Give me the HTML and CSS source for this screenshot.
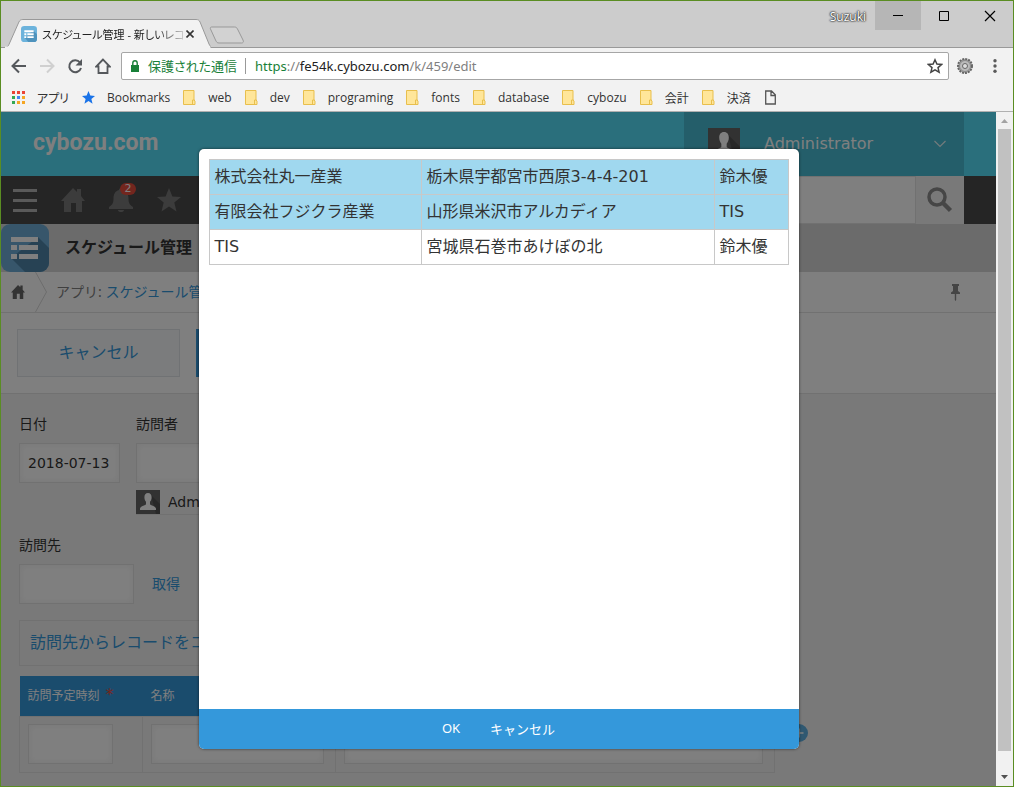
FILE: index.html
```html
<!DOCTYPE html>
<html lang="ja">
<head>
<meta charset="utf-8">
<title>スケジュール管理</title>
<link rel="stylesheet" href="styles.css">
</head>
<body>
<svg class="defs" aria-hidden="true">
  <symbol id="folder" viewBox="0 0 13 15">
    <path d="M1 .5h10V10l1 1v3.500H.5V.5z" fill="#ffe69a" stroke="#e8bf4d"/>
    <path d="M9.500 14.500V10h2" fill="none" stroke="#e8bf4d"/>
  </symbol>
  <symbol id="person" viewBox="0 0 24 24">
    <path d="M0 0h24v24H0z" fill="#646464"/>
    <path d="M15 5l9 9v10h-4z" fill="#505050"/>
    <path d="M12 3c2.400 0 3.600 1.800 3.600 4.200 0 2-.8 3.600-1.600 4.600v2.400c.6 1.200 5 1.600 6 4.200V20H4v-1.600c1-2.600 5.400-3 6-4.200v-2.400c-.8-1-1.600-2.600-1.600-4.600C8.400 4.800 9.600 3 12 3z" fill="#fff"/>
  </symbol>
  <symbol id="house" viewBox="0 0 24 24">
    <path d="M12 0l4 4V1h4v7l4 5h-3v11h-6v-9h-5v9H3V13H0z" fill="currentColor"/>
  </symbol>
  <symbol id="star" viewBox="0 0 24 24">
    <path d="M12 0l3.400 8.500 8.600.5-6.700 5.600 2.200 9L12 18.600 4.500 23.600l2.200-9L0 9l8.600-.5z" fill="currentColor"/>
  </symbol>
</svg>
<div class="window">
  <header class="titlebar">
    <div class="tab">
      <svg class="tab-shape" viewBox="0 0 211 29" preserveAspectRatio="none" aria-hidden="true">
        <path d="M0 28.500h4c2 0 3-1 4-3L18 3c1-2 2-2.500 4-2.500h174c2 0 3 .5 4 2.500l9 22c1 2 2 3.500 4 3.500V29H0z" fill="#f2f2f2" stroke="#999"/>
        <path d="M4 28.500h206" stroke="#f2f2f2" stroke-width="2"/>
      </svg>
      <svg class="favicon" viewBox="0 0 48 48" aria-hidden="true">
        <rect width="48" height="48" rx="10" fill="#6cb3dc"/>
        <path d="M36 13l12 12v13a10 10 0 0 1-10 10H22L12 36z" fill="#4f93bd"/>
        <path d="M10 13h28v6H10zM10 22h6v6h-6zM19 22h19v6H19zM10 31h6v5h-6zM19 31h19v5H19z" fill="#fff"/>
      </svg>
      <span class="tab-title">スケジュール管理 - 新しいレコ</span>
      <button class="tab-close" aria-label="タブを閉じる"><svg viewBox="0 0 8 8"><path d="M.5.5l7 7M7.500.5l-7 7" stroke="#333" stroke-width="1.600"/></svg></button>
    </div>
    <button class="new-tab" aria-label="新しいタブ"><svg viewBox="0 0 36 18"><path d="M2.500 1h23c2 0 2.500 1 3.500 3l5 10c1 2 0 3-1.500 3H10c-2 0-2.500-1-3.500-3L1.500 3C1 2 1.500 1 2.500 1z" fill="#d2d2d2" stroke="#999"/></svg></button>
    <div class="controls">
      <span class="profile">Suzuki</span>
      <button class="control control-active" aria-label="最小化"><svg viewBox="0 0 12 12"><path d="M1 5.500h10" stroke="#000"/></svg></button>
      <button class="control" aria-label="最大化"><svg viewBox="0 0 12 12"><path d="M1.500 1.500h9v9h-9z" fill="none" stroke="#000"/></svg></button>
      <button class="control" aria-label="閉じる"><svg viewBox="0 0 12 12"><path d="M1 1l10 10M11 1L1 11" stroke="#000" stroke-width="1.200"/></svg></button>
    </div>
  </header>

  <div class="toolbar">
    <button class="tool" aria-label="戻る"><svg viewBox="0 0 16 16"><path d="M15 8H2M8 1.500L1.500 8 8 14.500" fill="none" stroke="#55585c" stroke-width="2"/></svg></button>
    <button class="tool tool-off" aria-label="進む"><svg viewBox="0 0 16 16"><path d="M1 8h13M8 1.500L14.500 8 8 14.500" fill="none" stroke="#d0d0d0" stroke-width="2"/></svg></button>
    <button class="tool" aria-label="再読み込み"><svg viewBox="0 0 16 16"><path d="M13 4.500A6 6 0 1 0 14 10" fill="none" stroke="#55585c" stroke-width="2"/><path d="M15 1v6.500H8.500z" fill="#55585c"/></svg></button>
    <button class="tool" aria-label="ホーム"><svg viewBox="0 0 16 16"><path d="M8 1.500L1.200 8.500h2.300V15h9V8.500h2.300z" fill="none" stroke="#55585c" stroke-width="1.800"/></svg></button>
    <div class="omnibox">
      <svg class="lock" viewBox="0 0 8 12" aria-hidden="true"><path d="M0 5h8v7H0z" fill="#188038"/><path d="M1.800 5V3a2.200 2.200 0 0 1 4.400 0v2" fill="none" stroke="#188038" stroke-width="1.400"/></svg>
      <span class="secure">保護された通信</span>
      <span class="url"><span class="scheme">https</span><span class="dim">://</span>fe54k.cybozu.com<span class="dim">/k/459/edit</span></span>
      <button class="tool" aria-label="ブックマーク"><svg viewBox="0 0 16 16"><path d="M8 1.800l1.900 4.300 4.700.4-3.600 3.100 1.100 4.600L8 11.800l-4.100 2.400L5 9.600 1.400 6.500l4.700-.4z" fill="none" stroke="#444" stroke-width="1.500"/></svg></button>
    </div>
    <button class="tool" aria-label="拡張機能"><svg viewBox="0 0 16 16"><circle cx="8" cy="8" r="7" fill="#aaa" stroke="#666" stroke-width="2" stroke-dasharray="2 1"/><circle cx="8" cy="8" r="5.500" fill="#bbb" stroke="#888"/><circle cx="8" cy="8" r="2.500" fill="#ddd" stroke="#666"/></svg></button>
    <button class="tool tool-menu" aria-label="メニュー"><svg viewBox="0 0 16 16"><g fill="#5a5a5a"><circle cx="8" cy="2.700" r="1.700"/><circle cx="8" cy="8" r="1.700"/><circle cx="8" cy="13.300" r="1.700"/></g></svg></button>
  </div>

  <nav class="bookmarks">
    <a href="#"><svg viewBox="0 0 13 13"><path d="M0 0h3v3H0zM5 0h3v3H5zM10 0h3v3h-3z" fill="#ea4335"/><path d="M0 5h3v3H0z" fill="#34a853"/><path d="M5 5h3v3H5z" fill="#4285f4"/><path d="M10 5h3v3h-3zM10 10h3v3h-3zM5 10h3v3H5z" fill="#f5a623"/><path d="M0 10h3v3H0z" fill="#34a853"/></svg>アプリ</a>
    <a href="#" class="starred"><svg><use href="#star"/></svg>Bookmarks</a>
    <a href="#"><svg><use href="#folder"/></svg>web</a>
    <a href="#"><svg><use href="#folder"/></svg>dev</a>
    <a href="#"><svg><use href="#folder"/></svg>programing</a>
    <a href="#"><svg><use href="#folder"/></svg>fonts</a>
    <a href="#"><svg><use href="#folder"/></svg>database</a>
    <a href="#"><svg><use href="#folder"/></svg>cybozu</a>
    <a href="#"><svg><use href="#folder"/></svg>会計</a>
    <a href="#"><svg><use href="#folder"/></svg>決済</a>
    <a href="#" aria-label="ページ"><svg viewBox="0 0 13 15"><path d="M1.700 1h5.800l3.800 3.800V14H1.700zM7 1v4.500h4" fill="none" stroke="#555" stroke-width="1.300"/></svg></a>
  </nav>

  <div class="viewport">
    <div class="page">
      <div class="brandbar">
        <a href="#" class="logo">cybozu.com</a>
        <button class="account">
          <svg class="account-photo" aria-hidden="true"><use href="#person"/></svg>
          <span class="account-name">Administrator</span>
          <svg class="account-arrow" viewBox="0 0 12 8" aria-hidden="true"><path d="M.5 1L6 6.500 11.500 1" fill="none" stroke="#e6f6f8" stroke-width="1.200"/></svg>
        </button>
      </div>

      <div class="navbar">
        <button class="nav-button" aria-label="メニュー"><svg viewBox="0 0 24 24"><path d="M0 2.500h24M0 12.500h24M0 22.500h24" stroke="#b4b4b4" stroke-width="3"/></svg></button>
        <button class="nav-button" aria-label="ポータル"><svg><use href="#house"/></svg></button>
        <button class="nav-button" aria-label="通知"><svg viewBox="0 0 24 24"><path d="M12 0c1.500 0 2 1 2 2 4 1 5.500 4.500 5.500 8.500 0 5 1.500 6.500 4.500 8.500v2H0v-2c3-2 4.500-3.500 4.500-8.500C4.500 6.500 6 3 10 2c0-1 .5-2 2-2zM9 22h6c0 1.500-1.500 2-3 2s-3-.5-3-2z" fill="currentColor"/></svg><span class="count">2</span></button>
        <button class="nav-button" aria-label="ブックマーク"><svg><use href="#star"/></svg></button>
        <form class="search">
          <input type="text" aria-label="検索">
          <button type="button" aria-label="検索"><svg viewBox="0 0 26 26"><circle cx="10" cy="10" r="8" fill="none" stroke="#8c8c8c" stroke-width="3.500"/><path d="M15.500 15.500l8 8" stroke="#8c8c8c" stroke-width="4.500"/></svg></button>
        </form>
      </div>

      <div class="appbar">
        <svg viewBox="0 0 48 48" aria-hidden="true">
          <rect width="48" height="48" rx="9" fill="#6fadd6"/>
          <path d="M37 13l11 11v15a9 9 0 0 1-9 9H24L10 34z" fill="#4e84a8"/>
          <path d="M10 13h27v5H10zM10 21h6v5h-6zM18 21h19v5H18zM10 30h6v5h-6zM18 30h19v5H18z" fill="#fff"/>
        </svg>
        <h1>スケジュール管理</h1>
      </div>

      <div class="crumbs">
        <a href="#" class="crumb-home" aria-label="ホーム"><svg><use href="#house"/></svg></a>
        <svg class="crumb-arrow" viewBox="0 0 12 40" aria-hidden="true"><path d="M.5 0l11 20-11 20" fill="none" stroke="#d8d8d8"/></svg>
        <span class="crumb-text">アプリ: <a href="#">スケジュール管理</a></span>
        <svg class="pin" viewBox="0 0 9 17" aria-hidden="true"><path d="M1 0h7v2H7v5l2 1.500V10H5.200v6L4.500 17l-.7-1v-6H0V8.500L2 7V2H1z" fill="#8a8a8a"/></svg>
      </div>

      <div class="actions">
        <button class="cancel">キャンセル</button>
        <button class="save" aria-label="保存"></button>
      </div>

      <form class="record">
        <div class="fields">
          <div class="field">
            <label for="date">日付</label>
            <input id="date" class="box date" type="text" value="2018-07-13">
          </div>
          <div class="field">
            <label for="visitor">訪問者</label>
            <input id="visitor" class="box visitor" type="text">
            <div class="member"><svg aria-hidden="true"><use href="#person"/></svg><span>Administrator</span></div>
          </div>
        </div>
        <div class="field">
          <label for="place">訪問先</label>
          <div class="lookup">
            <input id="place" class="box place" type="text">
            <button type="button">取得</button>
          </div>
        </div>
        <button type="button" class="copy">訪問先からレコードをコ</button>
        <div class="visits-row">
          <table class="visits">
            <colgroup><col class="col-time"><col class="col-name"><col class="col-rest"></colgroup>
            <thead><tr><th>訪問予定時刻<span class="required">*</span></th><th>名称</th><th></th></tr></thead>
            <tbody><tr>
              <td><input class="box time" type="text" aria-label="訪問予定時刻"></td>
              <td><input class="box" type="text" aria-label="名称"></td>
              <td><input class="box" type="text" aria-label="住所"></td>
            </tr></tbody>
          </table>
          <button type="button" class="add" aria-label="行を追加"><svg viewBox="0 0 18 18"><circle cx="9" cy="9" r="9" fill="#5fb0e2"/><path d="M4.500 9h9M9 4.500v9" stroke="#fff" stroke-width="1.500"/></svg></button>
        </div>
      </form>

      <div class="overlay">
        <section class="dialog" role="dialog" aria-label="訪問先">
          <div class="dialog-body">
            <table class="results">
              <colgroup><col class="col-company"><col class="col-address"><col></colgroup>
              <tbody>
                <tr class="selected"><td>株式会社丸一産業</td><td>栃木県宇都宮市西原3-4-4-201</td><td>鈴木優</td></tr>
                <tr class="selected"><td>有限会社フジクラ産業</td><td>山形県米沢市アルカディア</td><td>TIS</td></tr>
                <tr><td>TIS</td><td>宮城県石巻市あけぼの北</td><td>鈴木優</td></tr>
              </tbody>
            </table>
          </div>
          <footer class="dialog-footer"><button>OK</button><button>キャンセル</button></footer>
        </section>
      </div>
    </div>
    <div class="scrollbar" aria-hidden="true">
      <svg viewBox="0 0 17 17"><path d="M5 11l3.500-4 3.500 4z" fill="#a3a3a3"/></svg>
      <div class="thumb"></div>
      <svg viewBox="0 0 17 17"><path d="M5 6l3.500 4L12 6z" fill="#505050"/></svg>
    </div>
  </div>
</div>
</body>
</html>
```
FILE: styles.css
```css
* { box-sizing: border-box; }
body {
  margin: 0;
  font-family: "DejaVu Sans", "Noto Sans CJK JP", sans-serif;
  font-size: 14px;
  color: #333;
}
button, input { font: inherit; color: inherit; margin: 0; }
button { padding: 0; border: 0; background: none; }
a { color: #3498db; text-decoration: none; }
svg { display: block; flex: none; }
.defs { display: none; }

.window {
  display: flex;
  flex-direction: column;
  min-height: 100vh;
  border: 1px solid #5a8d22;
  background: #f2f2f2;
}

/* browser frame */
.titlebar, .toolbar, .bookmarks {
  font-family: "Open Sans", "Noto Sans CJK JP", sans-serif;
  font-size: 12px;
}
.titlebar {
  display: flex;
  height: 47px;
  background: #ccc;
  border-bottom: 1px solid #999;
}
.tab {
  position: relative;
  display: flex;
  align-items: center;
  width: 210px;
  height: 29px;
  margin-top: 18px;
  padding: 0 17px 0 20px;
}
.tab-shape { position: absolute; inset: 0; width: 100%; height: 100%; }
.favicon { position: relative; width: 16px; height: 16px; margin-right: 5px; }
.tab-title {
  position: relative;
  flex: 1;
  overflow: hidden;
  white-space: nowrap;
  font-size: 11px;
  font-feature-settings: "palt";
  color: #222;
  -webkit-mask-image: linear-gradient(to right, #000 80%, rgba(0, 0, 0, 0.2));
  mask-image: linear-gradient(to right, #000 80%, rgba(0, 0, 0, 0.2));
}
.tab-close { position: relative; margin: 0 0 0 3px; }
.tab-close svg { width: 8px; height: 8px; }
.new-tab { align-self: flex-start; margin-top: 25px; margin-left: -2px; }
.new-tab svg { width: 36px; height: 18px; }
.controls { display: flex; align-items: flex-start; margin-left: auto; }
.profile {
  margin-right: 9px;
  line-height: 31px;
  color: #fff;
  text-shadow: 0 0 2px #222, 0 0 2px #222, 0 0 1px #333;
}
.control { display: grid; place-items: center; width: 46px; height: 29px; }
.control svg { width: 12px; height: 12px; }
.control-active { background: #b6b6b6; }

.toolbar {
  display: flex;
  align-items: center;
  gap: 12px;
  height: 36px;
  padding: 0 10px;
}
.tool svg { width: 16px; height: 16px; }
.tool-menu { margin-left: 2px; }
.omnibox {
  flex: 1;
  display: flex;
  align-items: center;
  height: 28px;
  margin-left: -2px;
  margin-right: -4px;
  padding: 0 5px 0 9px;
  border: 1px solid #a6a6a6;
  border-radius: 2px;
  background: #fff;
  font-family: "Noto Sans", "Noto Sans CJK JP", sans-serif;
  font-size: 13px;
}
.lock { width: 8px; height: 12px; }
.secure {
  margin-left: 9px;
  padding-right: 8px;
  border-right: 1px solid #999;
  line-height: 16px;
  font-feature-settings: "palt";
  color: #188038;
}
.url { flex: 1; margin-left: 9px; color: #222; }
.scheme { color: #188038; }
.dim { color: #808080; }

.bookmarks {
  display: flex;
  align-items: center;
  gap: 13px;
  height: 28px;
  padding: 0 11px;
  border-bottom: 1px solid #b0b0b0;
  white-space: nowrap;
}
.bookmarks a { display: flex; align-items: center; gap: 12px; color: #333; font-feature-settings: "palt"; }
.bookmarks svg { width: 13px; height: 15px; }
.bookmarks .starred svg { color: #1a73e8; height: 13px; }

/* page */
.viewport { flex: 1; display: flex; }
.page { position: relative; flex: 1; min-width: 0; background: #f3f3f3; overflow: hidden; }

.brandbar { display: flex; justify-content: space-between; height: 64px; padding: 0 32px; background: #54def8; }
.logo {
  font-family: Roboto, sans-serif;
  font-size: 23px;
  font-weight: bold;
  line-height: 62px;
  color: #fff;
}
.account {
  display: flex;
  align-items: center;
  width: 280px;
  padding: 0 18px 0 24px;
  background: #48bcd4;
  font-size: 16px;
  line-height: 20px;
  color: #fff;
}
.account-photo { width: 32px; height: 32px; }
.account-name { flex: 1; margin-left: 24px; text-align: left; }
.account-arrow { width: 12px; height: 8px; }

.navbar { display: flex; height: 48px; padding-right: 32px; background: #4a4a4a; }
.nav-button { position: relative; display: grid; place-items: center; width: 48px; color: #787878; }
.nav-button svg { width: 24px; height: 24px; }
.count {
  position: absolute;
  top: 7px;
  right: 9px;
  width: 16px;
  border-radius: 6px;
  background: #e74c3c;
  font-size: 11px;
  line-height: 12px;
  color: #fff;
}
.search { display: flex; width: 280px; margin-left: auto; }
.search input { flex: 1; min-width: 0; border: 1px solid #e3e3e3; background: #fff; }
.search button { display: grid; place-items: center; width: 48px; background: #f3f3f3; }
.search svg { width: 26px; height: 26px; }

.appbar { display: flex; align-items: center; gap: 16px; height: 48px; background: #d6d6d6; }
.appbar svg { width: 48px; height: 48px; }
.appbar h1 { margin: 0; font-size: 16px; line-height: 20px; color: #333; }

.crumbs {
  display: flex;
  align-items: center;
  height: 41px;
  padding-right: 36px;
  border-bottom: 1px solid #e3e3e3;
  background: #fff;
  color: #808080;
}
.crumb-home { width: 34px; padding-left: 10px; color: #666; }
.crumb-home svg { width: 14px; height: 14px; }
.crumb-arrow { width: 12px; height: 40px; }
.crumb-text { flex: 1; margin-left: 9px; font-family: "Noto Sans", "Noto Sans CJK JP", sans-serif; line-height: 16px; }
.pin { width: 9px; height: 17px; }

.actions {
  display: flex;
  gap: 16px;
  padding: 16px;
  border-bottom: 1px solid #e3e3e3;
  background: #fff;
}
.actions button { width: 163px; height: 48px; font-size: 16px; line-height: 20px; }
.cancel { border: 1px solid #e0e4e8; background: #f7f9fa; color: #3498db; }
.actions .save { background: #3498db; }

.record { display: grid; gap: 16px; justify-items: start; padding: 20px 18px 12px; }
.fields { display: flex; gap: 16px; }
.field { display: flex; flex-direction: column; }
.field label { height: 29px; line-height: 20px; }
.box {
  display: block;
  width: 100%;
  height: 40px;
  padding: 0 8px;
  border: 1px solid #e3e3e3;
  background: #fff;
  box-shadow: inset 1px 1px 6px #f5f5f5, inset -1px -1px 6px #f5f5f5;
}
.date { width: 101px; }
.visitor { width: 200px; }
.place { width: 115px; }
.time { width: 85px; }
.member { display: flex; height: 25px; margin-top: 7px; border-bottom: 1px solid #e3e3e3; line-height: 24px; }
.member svg { width: 24px; height: 24px; }
.member span { margin-left: 8px; }
.lookup { display: flex; align-items: center; gap: 18px; color: #3498db; line-height: 18px; }
.record > .field { margin-top: 4px; }
.copy {
  width: 320px;
  height: 46px;
  padding: 0 10px;
  border: 1px solid #e3e3e3;
  font-size: 16px;
  line-height: 20px;
  text-align: left;
  color: #3498db;
}
.visits-row { display: flex; align-items: center; gap: 15px; margin-top: -6px; }
.visits { width: 756px; border-collapse: collapse; table-layout: fixed; }
.col-time { width: 123px; }
.col-name { width: 193px; }
.visits th {
  height: 40px;
  padding: 0 8px;
  background: #3498db;
  font-size: 12px;
  font-weight: normal;
  line-height: 16px;
  text-align: left;
  color: #fff;
}
.required { margin-left: 6px; font-size: 16px; line-height: 12px; color: #e74c3c; }
.visits td { height: 56px; padding: 7px 11px 8px 8px; border: 1px solid #e3e3e3; }
.visits th:nth-child(1) { padding-right: 0; }
.add { margin-top: 17px; }
.add svg { width: 18px; height: 18px; }

/* dialog */
.overlay {
  position: absolute;
  inset: 0;
  display: grid;
  place-items: center;
  background: rgba(0, 0, 0, 0.5);
}
.dialog {
  display: flex;
  flex-direction: column;
  width: 600px;
  max-width: 100%;
  min-height: 600px;
  border-radius: 5px;
  overflow: hidden;
  background: #fff;
  box-shadow: 0 0 3px rgba(0, 0, 0, 0.6);
}
.dialog-body { flex: 1; padding: 10px; }
.results { width: 100%; border-collapse: collapse; table-layout: fixed; font-size: 16px; }
.col-company { width: 212px; }
.col-address { width: 293px; }
.results td { height: 35px; padding: 0 5px; border: 1px solid #c8c8c8; line-height: 24px; white-space: nowrap; }
.results .selected { background: #a0d8ef; }
.dialog-footer {
  display: flex;
  justify-content: center;
  gap: 30px;
  height: 40px;
  padding-bottom: 2px;
  background: #3498db;
  font-family: "Noto Sans", "Noto Sans CJK JP", sans-serif;
  font-size: 13px;
  color: #fff;
}

.scrollbar { display: flex; flex-direction: column; width: 17px; background: #f1f1f1; }
.scrollbar svg { width: 17px; height: 17px; }
.thumb { flex: 1; margin: 0 2px 18px; background: #c1c1c1; }
```
